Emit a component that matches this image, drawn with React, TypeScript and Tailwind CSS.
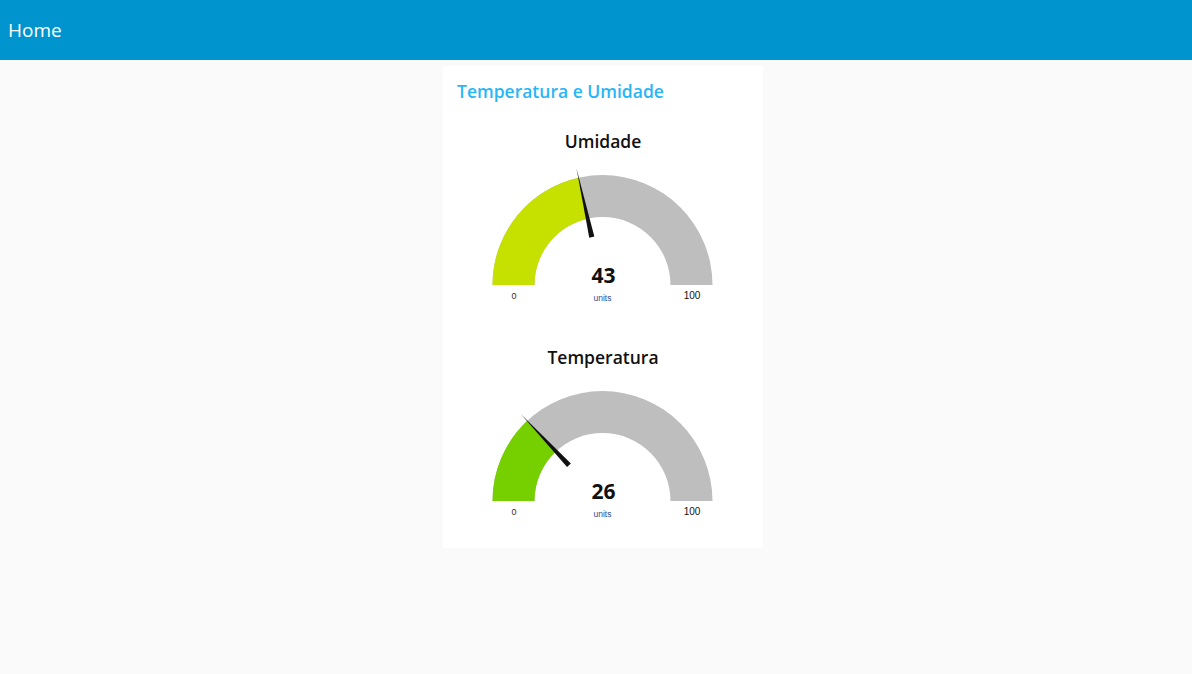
import React from "react";

function Gauge({ title, value, color }: { title: string; value: number; color: string }) {
  const cx = 159.5;
  const cy = 119;
  const R = 110;
  const r = 68;
  const pt = (rad: number, a: number) => [cx + rad * Math.cos(a), cy - rad * Math.sin(a)];
  const arc = (from: number, to: number) => {
    const [x1, y1] = pt(R, from);
    const [x2, y2] = pt(R, to);
    const [x3, y3] = pt(r, to);
    const [x4, y4] = pt(r, from);
    return `M${x1} ${y1} A${R} ${R} 0 0 1 ${x2} ${y2} L${x3} ${y3} A${r} ${r} 0 0 0 ${x4} ${y4} Z`;
  };
  // needle: thick base near the value, point past the outer edge
  const a = Math.PI * (1 - value / 100);
  const [tx, ty] = pt(119, a);
  const [bx, by] = pt(49, a);
  const px = Math.sin(a) * 2.6;
  const py = Math.cos(a) * 2.6;

  return (
    <div className="flex h-[216px] flex-col">
      <div className="flex h-[50px] items-center justify-center text-[17.5px] font-semibold text-[#111]">{title}</div>
      <svg width="320" height="166" viewBox="0 0 320 166">
        <path d={arc(Math.PI, 0)} fill="#bebebe" />
        <path d={arc(Math.PI, a)} fill={color} />
        <polygon points={`${bx + px},${by + py} ${bx - px},${by - py} ${tx},${ty}`} fill="#111" />
        <text x={cx + 1} y={117} textAnchor="middle" fontSize="21" fontWeight="700" fill="#111">
          {value}
        </text>
        <g className="font-['Liberation_Sans',Arial,sans-serif]">
          <text x={cx} y={135} textAnchor="middle" fontSize="8.5" fill="#2f4d9a">
            units
          </text>
          <text x={71} y={133} textAnchor="middle" fontSize="9" fill="#3a2a2a">
            0
          </text>
          <text x={249} y={133} textAnchor="middle" fontSize="10" fill="#111">
            100
          </text>
        </g>
      </svg>
    </div>
  );
}

export default function App() {
  return (
    <div className="min-h-[674px] bg-[#fafafa] font-['Open_Sans','Noto_Sans',sans-serif]">
      <header className="flex h-[60px] items-center bg-[#0094ce] px-[8px] text-[19px] text-white">Home</header>
      <main className="pt-[6px]">
        <section className="ml-[443px] w-[320px] bg-white">
          <div className="flex h-[50px] items-center px-[14px] text-[17.5px] font-semibold text-[#29b6f6]">
            Temperatura e Umidade
          </div>
          <Gauge title="Umidade" value={43} color="#c6e000" />
          <Gauge title="Temperatura" value={26} color="#76d000" />
        </section>
      </main>
    </div>
  );
}
